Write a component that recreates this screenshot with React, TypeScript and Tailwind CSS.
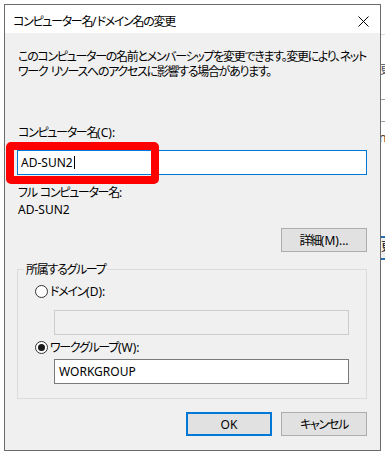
import React from 'react';

const font =
  "font-['Noto_Sans','Noto_Sans_CJK_JP',sans-serif] [font-feature-settings:'palt'] tracking-[-1.3px]";

// latin bits keep normal spacing; only the kana/kanji are tightened
function L({ children }: { children: React.ReactNode }) {
  return <span className="tracking-normal">{children}</span>;
}

function Radio({ checked, label, keyText }: { checked?: boolean; label: string; keyText: string }) {
  return (
    <div className="flex items-center h-[16px] ml-[17px] gap-[2px]">
      <span className="w-[13px] h-[13px] rounded-full border border-[#333333] bg-white flex items-center justify-center">
        {checked && <span className="w-[7px] h-[7px] rounded-full bg-[#1a1a1a]" />}
      </span>
      <span className="leading-[15px]">
        {label}
        <L>{keyText}</L>
      </span>
    </div>
  );
}

function Button({ children, primary }: { children: React.ReactNode; primary?: boolean }) {
  return (
    <button
      className={`w-[86px] h-[24px] bg-[#e1e1e1] text-[12px] leading-[15px] text-black ${
        primary ? 'border-2 border-[#0078d7]' : 'border border-[#adadad]'
      }`}
    >
      {children}
    </button>
  );
}

export default function App() {
  return (
    <div className={`relative w-[385px] h-[456px] overflow-hidden bg-white text-[12px] text-black ${font}`}>
      {/* window behind, peeking out on the right */}
      <div className="absolute left-[381px] top-0 w-[4px] h-[456px] bg-white overflow-hidden">
        <div className="absolute top-[34px] left-0 w-full h-px bg-[#dcdcdc]" />
        <div className="absolute top-[62px] -left-[1px] leading-[15px] text-[#3c4a5a]">更</div>
        <div className="absolute top-[99px] left-0 w-full h-px bg-[#a0a0a0]" />
        <div className="absolute top-[121px] left-0 w-full h-px bg-[#a0a0a0]" />
        <div className="absolute top-[130px] -left-[2px] leading-[15px] text-[#5a3a2a]">nt</div>
        <div className="absolute top-[236px] left-0 w-full h-[24px] border-y-2 border-[#2b6cb0] bg-[#f0f0f0] leading-[18px]">
          更
        </div>
      </div>

      {/* dialog */}
      <div className="absolute left-[4px] top-[4px] w-[377px] h-[447px] border border-[#6b6b6b] bg-[#f0f0f0] flex flex-col">
        {/* title bar */}
        <div className="h-[28px] bg-white flex items-start pt-[9px] pl-[8px] pr-[10px] justify-between">
          <span className="leading-[15px]">
            コンピューター名<L>/</L>ドメイン名の変更
          </span>
          <svg width="11" height="11" viewBox="0 0 11 11" className="mt-[2px] mr-[1px]">
            <path d="M0.5 0.5 L10.5 10.5 M10.5 0.5 L0.5 10.5" stroke="#000" strokeWidth="1" />
          </svg>
        </div>

        <div className="flex flex-col pl-[12px] pr-[13px] pt-[16px]">
          <p className="leading-[15px] pl-[1px] whitespace-nowrap">
            このコンピューターの名前とメンバーシップを変更できます。変更により、ネット
            <br />
            ワーク<L> </L>リソースへのアクセスに影響する場合があります。
          </p>

          <p className="leading-[15px] mt-[46px] pl-[1px]">
            コンピューター名<L>(C):</L>
          </p>

          <div className="relative mt-[10px]">
            <div className="h-[25px] bg-white border border-[#0078d7] flex items-center pl-[3px]">
              <span className="leading-[15px] tracking-normal">AD-SUN2</span>
              <span className="w-px h-[13px] bg-black ml-[1px]" />
            </div>
            {/* red highlight */}
            <div className="absolute -left-[11px] -top-[8px] w-[153px] h-[42px] border-[8px] border-[#ff0000] rounded-[5px]" />
          </div>

          <p className="leading-[15px] mt-[10px] pl-[1px]">
            フル<L> </L>コンピューター名<L>:</L>
          </p>
          <p className="leading-[15px] mt-[2px] pl-[1px] tracking-normal">AD-SUN2</p>

          <div className="flex justify-end mt-[11px]">
            <Button>
              詳細<L>(M)...</L>
            </Button>
          </div>

          <fieldset className="mt-[10px] border border-[#dcdcdc] pb-[14px]">
            <legend className="ml-[6px] px-[2px] leading-[15px]">所属するグループ</legend>
            <div className="mt-[6px]">
              <Radio label="ドメイン" keyText="(D):" />
            </div>
            <div className="mt-[11px] ml-[36px] w-[295px] h-[25px] border border-[#cccccc] bg-[#f0f0f0]" />
            <div className="mt-[4px]">
              <Radio checked label="ワークグループ" keyText="(W):" />
            </div>
            <div className="mt-[4px] ml-[36px] w-[295px] h-[25px] border border-[#7a7a7a] bg-white flex items-center pl-[4px]">
              <span className="leading-[15px] tracking-normal">WORKGROUP</span>
            </div>
          </fieldset>

          <div className="flex justify-end gap-[9px] mt-[13px]">
            <Button primary>
              <L>OK</L>
            </Button>
            <Button>キャンセル</Button>
          </div>
        </div>
      </div>
    </div>
  );
}
